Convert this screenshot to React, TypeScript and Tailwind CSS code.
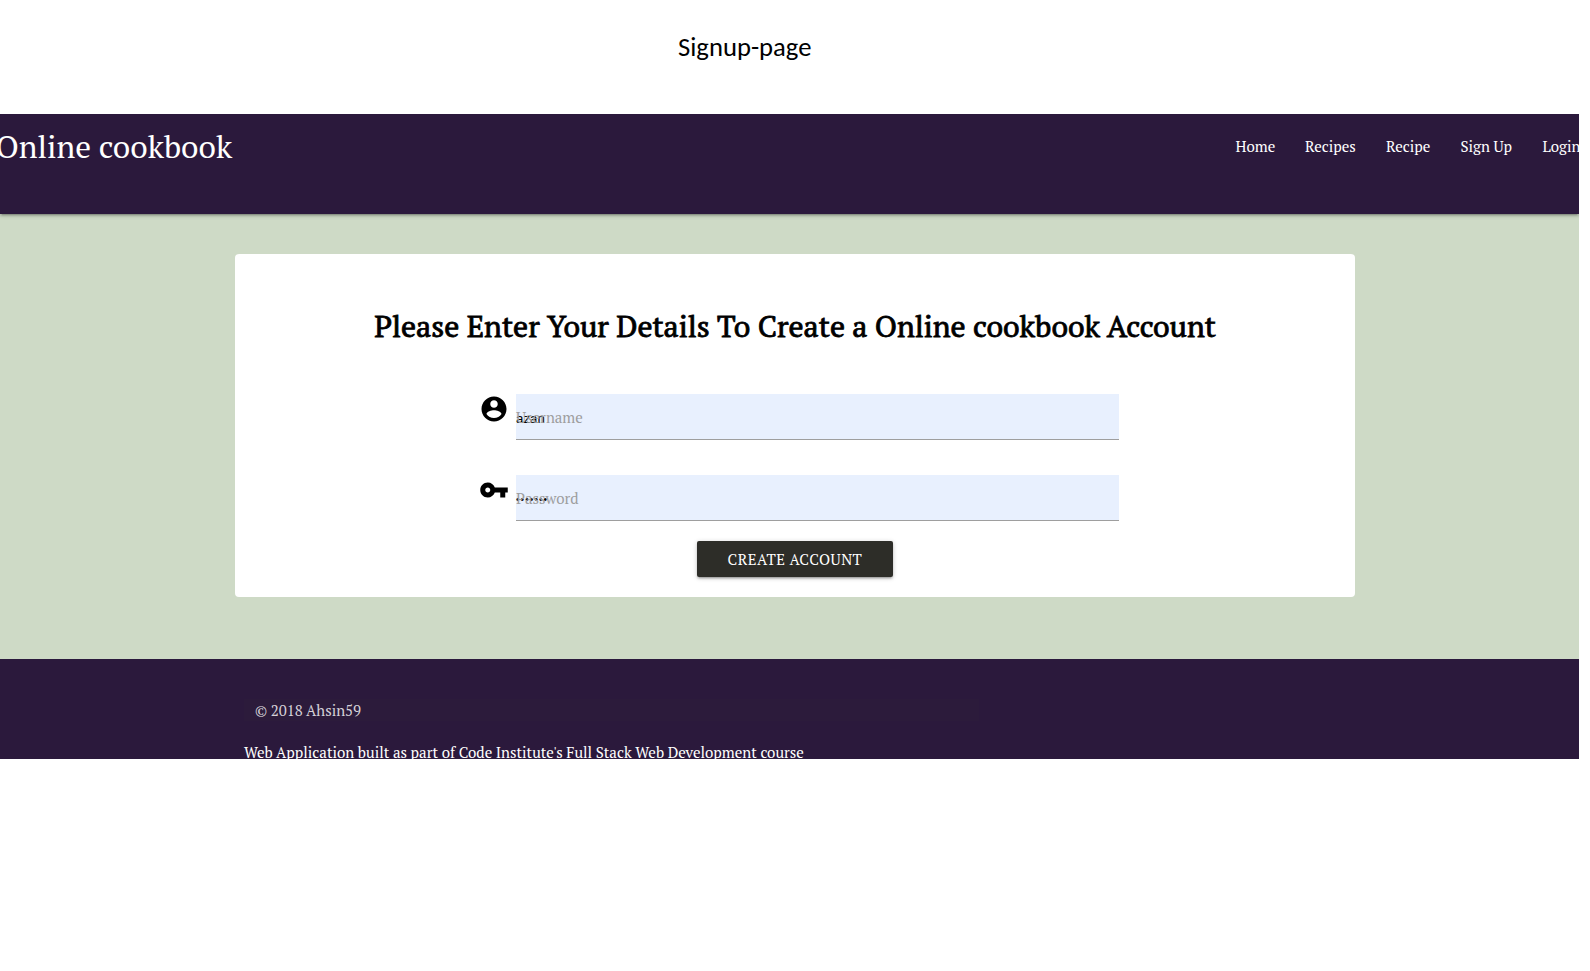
import React from "react";

const navItems = [
  { label: "Home", box: "w-[69.5px]" },
  { label: "Recipes", box: "w-[81px]" },
  { label: "Recipe", box: "w-[74.5px]" },
  { label: "Sign Up", box: "w-[82px]" },
  { label: "Login", box: "w-[69px]" },
];

function AccountIcon() {
  return (
    <svg viewBox="0 0 24 24" className="h-[30px] w-[30px]" fill="#000">
      <path d="M12 2C6.48 2 2 6.48 2 12s4.48 10 10 10 10-4.48 10-10S17.52 2 12 2zm0 3c1.66 0 3 1.34 3 3s-1.34 3-3 3-3-1.34-3-3 1.34-3 3-3zm0 14.2c-2.5 0-4.71-1.28-6-3.22.03-1.99 4-3.08 6-3.08 1.99 0 5.97 1.09 6 3.08-1.29 1.94-3.5 3.22-6 3.22z" />
    </svg>
  );
}

function KeyIcon() {
  return (
    <svg viewBox="0 0 24 24" className="h-[30px] w-[30px]" fill="#000">
      <path d="M12.65 10C11.83 7.67 9.61 6 7 6c-3.31 0-6 2.69-6 6s2.69 6 6 6c2.61 0 4.83-1.67 5.65-4H17v4h4v-4h2v-4H12.65zM7 14c-1.1 0-2-.9-2-2s.9-2 2-2 2 .9 2 2-.9 2-2 2z" />
    </svg>
  );
}

interface FieldProps {
  icon: React.ReactNode;
  label: string;
  value: string;
  valueSize: string;
}

function Field({ icon, label, value, valueSize }: FieldProps) {
  return (
    <div className="flex h-[46px] w-[640.5px]">
      <div className="w-[37.5px] shrink-0">{icon}</div>
      <div className="relative h-[46px] w-[603px] border-b border-[#9e9e9e] bg-[#e8f0fe]">
        <span className={`absolute left-0 top-[15px] font-['Liberation_Sans',sans-serif] leading-[20px] text-black ${valueSize}`}>
          {value}
        </span>
        <label className="absolute left-0 top-[11px] leading-[24px] text-[#9e9e9e]">{label}</label>
      </div>
    </div>
  );
}

export default function App() {
  return (
    <div className="h-[971px] w-[1590px] overflow-hidden bg-white font-['PT_Serif','Liberation_Serif',serif] text-[15px]">
      <div className="flex h-[114px] pl-[678px] pt-[31px] font-[Carlito,Lato,sans-serif] text-[26.67px] leading-[32px] text-black">
        <h2 className="whitespace-nowrap">Signup-page</h2>
      </div>

      <div className="h-[645px] w-[1579px] overflow-hidden bg-[#cedac6]">
        <nav className="relative flex h-[100px] justify-between bg-[#2b193c] text-white shadow-[0_2px_2px_0_rgba(0,0,0,0.14),0_3px_1px_-2px_rgba(0,0,0,0.12),0_1px_5px_0_rgba(0,0,0,0.2)]">
          <a className="-ml-[4.5px] whitespace-nowrap text-[31.5px] leading-[64px]">Online cookbook</a>
          <ul className="-mr-[32.5px] flex leading-[64px]">
            {navItems.map((item) => (
              <li key={item.label} className={item.box}>
                <a className="whitespace-nowrap">{item.label}</a>
              </li>
            ))}
          </ul>
        </nav>

        <main className="flex h-[445px] justify-center pl-[11px] pt-[40px]">
          <section className="flex h-[343px] w-[1120px] flex-col items-center rounded-[4px] bg-white">
            <h1 className="mt-[51px] h-[89px] whitespace-nowrap text-[30px] leading-[42px] text-black [-webkit-text-stroke:0.8px_black]">
              Please Enter Your Details To Create a Online cookbook Account
            </h1>
            <div className="flex flex-col gap-[35px] pl-[7.5px]">
              <Field icon={<AccountIcon />} label="Username" value="azan" valueSize="text-[13.33px]" />
              <Field icon={<KeyIcon />} label="Password" value="•••••••" valueSize="text-[10px] tracking-[1.1px]" />
            </div>
            <button className="mt-[20px] h-[36px] w-[196px] rounded-[2px] bg-[#2d2d28] text-[15px] leading-[36px] tracking-[0.5px] text-white shadow-[0_2px_2px_0_rgba(0,0,0,0.14),0_3px_1px_-2px_rgba(0,0,0,0.12),0_1px_5px_0_rgba(0,0,0,0.2)]">
              CREATE ACCOUNT
            </button>
          </section>
        </main>

        <footer className="h-[100px] overflow-hidden bg-[#2b193c] pl-[244px] pt-[40px]">
          <div className="h-[22px] w-[735px] bg-[#2c1b3b] pl-[11px] leading-[22px] text-[#d5d1d8]">© 2018 Ahsin59</div>
          <p className="mt-[19px] whitespace-nowrap leading-[24px] text-white">
            Web Application built as part of Code Institute's Full Stack Web Development course
          </p>
        </footer>
      </div>
    </div>
  );
}
